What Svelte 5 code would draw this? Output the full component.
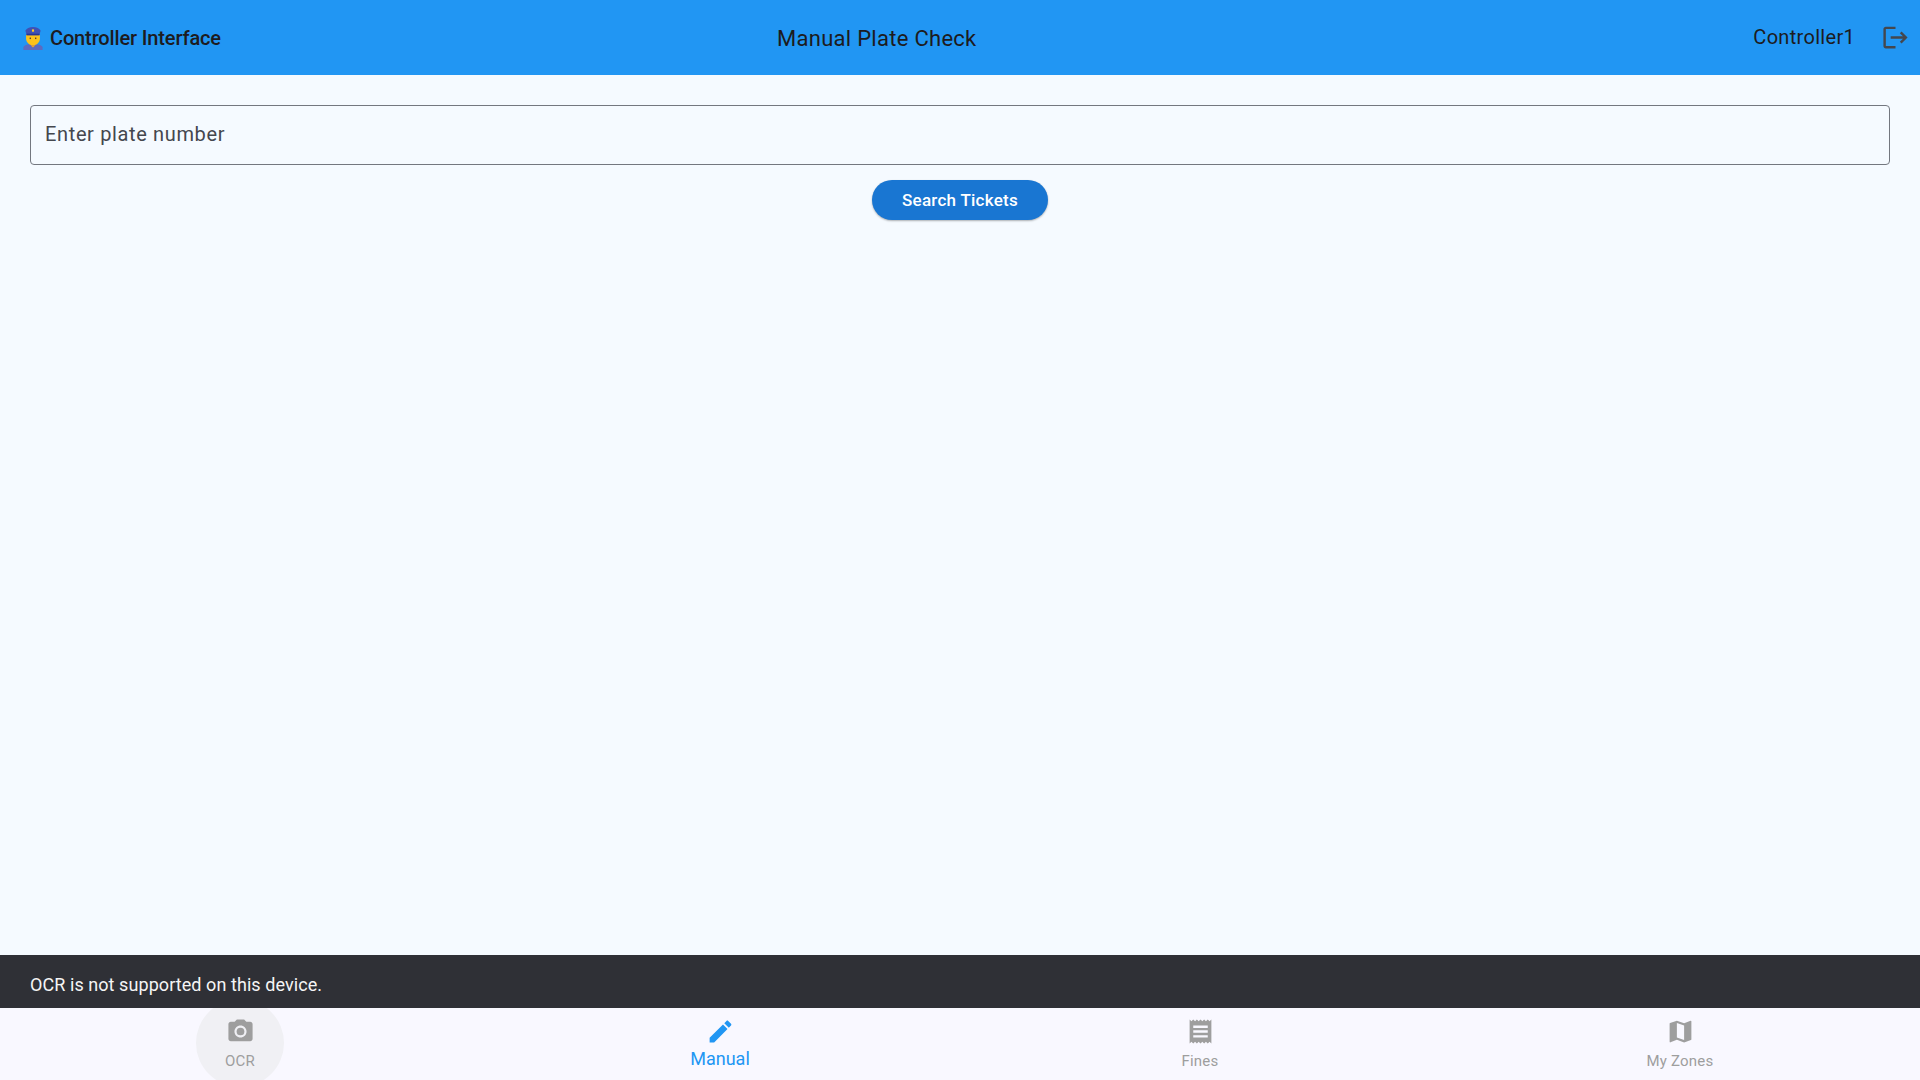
<script lang="ts">
    const tabs = [
        { label: 'OCR', icon: 'camera' },
        { label: 'Manual', icon: 'edit', active: true },
        { label: 'Fines', icon: 'receipt' },
        { label: 'My Zones', icon: 'map' },
    ];
</script>

<div class="page">
    <header class="topbar">
        <div class="brand">
            <svg class="officer" viewBox="0 0 20 24" width="20" height="23" aria-hidden="true">
                <path d="M0 24v-2.500C0 19.500 3.500 18.300 7 17.800h6c3.500.5 7 1.700 7 3.700V24z" fill="#5c6bc0" />
                <path d="M2.800 8h14.400v4.200c0 3.700-3.200 6.800-7.200 6.800s-7.200-3.100-7.200-6.800z" fill="#fcc21b" />
                <path d="M7.500 19h5L10 21.500z" fill="#f5a623" />
                <path d="M2 4C3 1.500 6.300 0 10 0s7 1.500 8 4l-1.500 4.500h-13z" fill="#3f51b5" />
                <rect x="3.200" y="7" width="13.600" height="1.600" fill="#283593" />
                <rect x="8.900" y="2.500" width="2.200" height="2.400" fill="#ffca28" />
                <rect x="6.500" y="11" width="1.400" height="1.600" fill="#5d4037" />
                <rect x="12.100" y="11" width="1.400" height="1.600" fill="#5d4037" />
            </svg>
            <span>Controller Interface</span>
        </div>
        <h1 class="title">Manual Plate Check</h1>
        <div class="user">
            <span class="username">Controller1</span>
            <svg viewBox="0 0 24 24" width="29" height="29" aria-hidden="true">
                <path d="M17 7l-1.410 1.410L18.170 11H8v2h10.170l-2.580 2.580L17 17l5-5zM4 5h8V3H4c-1.100 0-2 .9-2 2v14c0 1.100.9 2 2 2h8v-2H4V5z" />
            </svg>
        </div>
    </header>

    <main class="content">
        <input class="plate" type="text" placeholder="Enter plate number" />
        <button class="search">Search Tickets</button>
    </main>

    <div class="snackbar">OCR is not supported on this device.</div>

    <nav class="tabs">
        {#each tabs as tab}
            <button class="tab" class:active={tab.active}>
                {#if tab.label === 'OCR'}<span class="ripple"></span>{/if}
                <svg viewBox="0 0 24 24" width="29" height="29" aria-hidden="true">
                    {#if tab.icon === 'camera'}
                        <circle cx="12" cy="12" r="3.200" />
                        <path d="M9 2L7.170 4H4c-1.100 0-2 .9-2 2v12c0 1.100.9 2 2 2h16c1.100 0 2-.9 2-2V6c0-1.100-.9-2-2-2h-3.170L15 2H9zm3 15c-2.760 0-5-2.240-5-5s2.240-5 5-5 5 2.240 5 5-2.240 5-5 5z" />
                    {:else if tab.icon === 'edit'}
                        <path d="M3 17.250V21h3.750L17.810 9.940l-3.750-3.750L3 17.250zM20.710 7.040c.39-.39.39-1.020 0-1.410l-2.340-2.340c-.39-.39-1.020-.39-1.410 0l-1.830 1.830 3.750 3.750 1.830-1.830z" />
                    {:else if tab.icon === 'receipt'}
                        <path d="M18 17H6v-2h12v2zm0-4H6v-2h12v2zm0-4H6V7h12v2zM3 22l1.500-1.500L6 22l1.500-1.500L9 22l1.500-1.500L12 22l1.500-1.500L15 22l1.500-1.500L18 22l1.500-1.500L21 22V2l-1.500 1.500L18 2l-1.500 1.500L15 2l-1.500 1.500L12 2l-1.500 1.500L9 2 7.500 3.500 6 2 4.500 3.500 3 2v20z" />
                    {:else}
                        <path d="M20.500 3l-.16.03L15 5.100 9 3 3.360 4.900c-.21.07-.36.25-.36.48V20.500c0 .28.22.5.5.5l.16-.03L9 18.900l6 2.100 5.640-1.900c.21-.07.36-.25.36-.48V3.500c0-.28-.22-.5-.5-.5zM15 19l-6-2.110V5l6 2.110V19z" />
                    {/if}
                </svg>
                <span class="label">{tab.label}</span>
            </button>
        {/each}
    </nav>
</div>

<style>
    :global(body) {
        margin: 0;
        font-family: Roboto, "Liberation Sans", sans-serif;
    }

    .page {
        display: flex;
        flex-direction: column;
        height: 100vh;
        background: #f5faff;
    }

    .topbar {
        display: flex;
        align-items: center;
        height: 75px;
        flex-shrink: 0;
        padding: 0 10px 0 23px;
        background: #2196f3;
        color: #1d1b20;
    }

    .brand {
        display: flex;
        align-items: center;
        gap: 7px;
        font-size: 20px;
        font-weight: 500;
        letter-spacing: -0.14px;
        width: 754px;
        padding-top: 1px;
    }

    .officer {
        flex-shrink: 0;
    }

    .title {
        margin: 0;
        font-size: 22px;
        font-weight: 400;
        letter-spacing: 0.28px;
        padding-top: 1px;
    }

    .user {
        display: flex;
        align-items: center;
        gap: 26px;
        margin-left: auto;
        font-size: 20px;
        letter-spacing: 0.3px;
    }

    .username {
        padding-bottom: 2px;
    }

    .user svg {
        fill: #44474e;
    }

    .content {
        flex: 1;
        display: flex;
        flex-direction: column;
        align-items: center;
        gap: 15px;
        padding: 30px 30px 0;
    }

    .plate {
        box-sizing: border-box;
        width: 100%;
        height: 60px;
        padding: 0 14px 2px;
        border: 1px solid #73777f;
        border-radius: 4px;
        background: transparent;
        font: 400 20px Roboto, sans-serif;
        letter-spacing: 0.64px;
        outline: none;
    }

    .plate::placeholder {
        color: #44474e;
        opacity: 1;
    }

    .search {
        width: 176px;
        height: 40px;
        border: none;
        border-radius: 20px;
        background: #1976d2;
        color: #fff;
        font: 500 17px Roboto, sans-serif;
        letter-spacing: 0.26px;
        box-shadow: 0 1px 2px rgba(0, 0, 0, 0.3);
    }

    .snackbar {
        display: flex;
        align-items: center;
        height: 53px;
        flex-shrink: 0;
        padding: 5px 30px 0;
        box-sizing: border-box;
        background: #2f3036;
        color: #f5f5f5;
        font-size: 18px;
        letter-spacing: 0.07px;
    }

    .tabs {
        display: grid;
        grid-template-columns: repeat(4, 1fr);
        height: 72px;
        flex-shrink: 0;
        overflow: hidden;
        background: #f9f8ff;
    }

    .tab {
        position: relative;
        display: flex;
        flex-direction: column;
        align-items: center;
        padding: 9px 0 0;
        border: none;
        background: none;
        color: #9e9e9e;
        font-family: inherit;
    }

    .tab svg {
        position: relative;
        fill: currentColor;
    }

    .label {
        position: relative;
        margin-top: 6px;
        font-size: 15px;
        letter-spacing: 0.2px;
    }

    .tab.active {
        color: #2196f3;
    }

    .tab.active .label {
        margin-top: 2px;
        font-size: 18px;
        letter-spacing: 0;
    }

    .ripple {
        position: absolute;
        left: 50%;
        top: -9px;
        width: 88px;
        height: 88px;
        margin-left: -44px;
        border-radius: 50%;
        background: #f0f0f4;
    }
</style>
